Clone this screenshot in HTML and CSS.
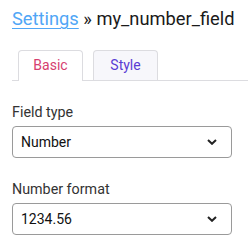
FILE: index.html
```html
<!DOCTYPE html>
<html lang="en">
<head>
    <meta charset="UTF-8">
    <title>my_number_field</title>
    <link rel="stylesheet" href="styles.css">
</head>
<body>
    <h1 class="crumbs"><a href="#">Settings</a> » my_number_field</h1>

    <div class="tabs">
        <div class="tab active">Basic</div>
        <div class="tab">Style</div>
    </div>

    <div class="field">
        <label for="fieldType">Field type</label>
        <div class="select-wrap">
            <select id="fieldType">
                <option>Number</option>
            </select>
            <svg class="chevron" width="10" height="6" viewBox="0 0 10 6"><path d="M1 1l4 3.8L9 1" fill="none" stroke="#222" stroke-width="2"/></svg>
        </div>
    </div>

    <div class="field">
        <label for="numFormat">Number format</label>
        <div class="select-wrap">
            <select id="numFormat">
                <option>1234.56</option>
            </select>
            <svg class="chevron" width="10" height="6" viewBox="0 0 10 6"><path d="M1 1l4 3.8L9 1" fill="none" stroke="#222" stroke-width="2"/></svg>
        </div>
    </div>
</body>
</html>
```

FILE: styles.css
```css
* {
    box-sizing: border-box;
    margin: 0;
    padding: 0;
}

body {
    font-family: Roboto, "Liberation Sans", sans-serif;
    color: #222;
    background: #fff;
    padding: 7px 0 0 12px;
}

.crumbs {
    font-size: 18.3px;
    font-weight: 400;
    line-height: 24px;
    color: #1a1a1a;
    white-space: nowrap;
}

.crumbs a {
    color: #50a6f6;
    text-decoration: underline;
    text-decoration-thickness: 1px;
    text-underline-offset: 3px;
}

.tabs {
    display: flex;
    gap: 10px;
    margin-top: 19px;
    padding-left: 6px;
    border-bottom: 1px solid #dcdce0;
}

.tab {
    width: 65px;
    height: 30px;
    line-height: 29px;
    text-align: center;
    font-size: 14px;
    border: 1px solid #dcdce0;
    border-bottom: none;
    border-radius: 4px 4px 0 0;
    background: #f7f7fb;
    color: #5a3cd4;
}

.tab.active {
    background: #fff;
    color: #d6406f;
    height: 31px;
    margin-bottom: -1px;
}

.field {
    margin-top: 21px;
    width: 220px;
}

label {
    display: block;
    font-size: 14.3px;
    line-height: 20px;
    color: #333;
    margin-bottom: 4px;
}

.select-wrap {
    position: relative;
}

select {
    display: block;
    width: 100%;
    height: 32px;
    appearance: none;
    border: 1px solid #9a9a9a;
    border-radius: 4px;
    background: #fff;
    font-family: inherit;
    font-size: 14px;
    color: #111;
    padding: 0 8px;
}

.chevron {
    position: absolute;
    right: 15px;
    top: 13px;
    pointer-events: none;
}
```
